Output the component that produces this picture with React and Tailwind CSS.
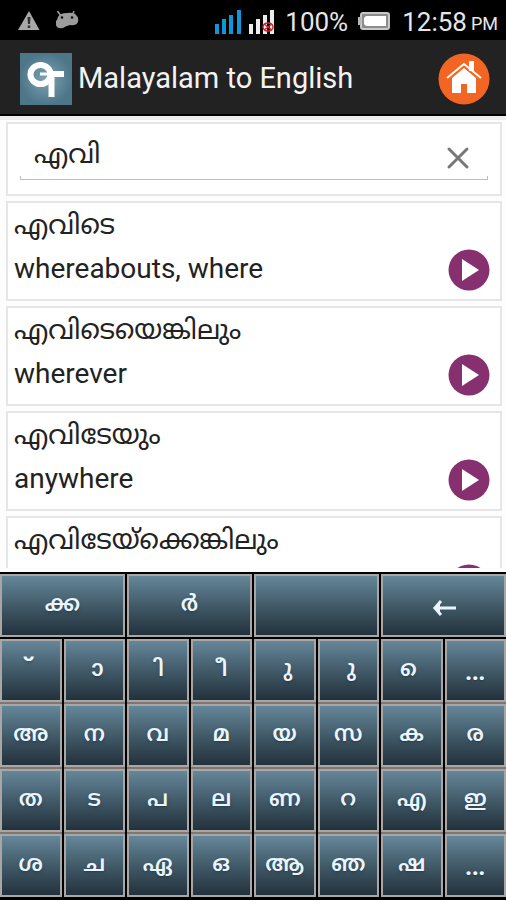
import { X } from 'lucide-react';

const results = [
  { id: 1, word: 'എവിടെ', meaning: 'whereabouts, where' },
  { id: 2, word: 'എവിടെയെങ്കിലും', meaning: 'wherever' },
  { id: 3, word: 'എവിടേയും', meaning: 'anywhere' },
  { id: 4, word: 'എവിടേയ്ക്കെങ്കിലും', meaning: '' },
];

const wideKeys = ['ക്ക', 'ർ', '', '←'];

// vowel signs are set on a no-break space so they stand alone
const keyRows = [
  ['˘', '\u00a0ാ', '\u00a0ി', '\u00a0ീ', '\u00a0ു', '\u00a0ു', '\u00a0െ', '...'],
  ['അ', 'ന', 'വ', 'മ', 'യ', 'സ', 'ക', 'ര'],
  ['ത', 'ട', 'പ', 'ല', 'ണ', 'റ', 'എ', 'ഇ'],
  ['ശ', 'ച', 'ഏ', 'ഒ', 'ആ', 'ഞ', 'ഷ', '...'],
];

const StatusBar = () => (
  <div className="flex h-10 shrink-0 items-center bg-black pl-4 pr-2 pt-1 text-[26px] text-[#e6e6e6]">
    <svg className="h-6 w-6" viewBox="0 0 24 24" fill="#a8a8a8">
      <path d="M13 1 23.500 20H2z" />
      <path d="M11.500 7h3l-.5 7h-2zM11.700 15.500h2.600v2.500h-2.600z" fill="#333" />
    </svg>
    <svg className="ml-4 h-6 w-6" viewBox="0 0 24 24" fill="#9c9c9c">
      <path d="M1.500 1 5 6M18 1 16 6" stroke="#9c9c9c" strokeWidth="1.500" />
      <path d="M2 7Q4 3 11 3Q18 2 20 5Q23 7 22 12Q20 16 14 15Q10 16 7 18Q1 19 0 15Q-1 11 1 10Z" />
      <circle cx="6" cy="7.500" r="1.300" fill="#111" />
      <circle cx="16" cy="7.500" r="1.300" fill="#111" />
    </svg>
    <div className="ml-auto flex items-center">
      <svg className="h-8 w-16" viewBox="0 0 64 32">
        <path d="M2 18h4v10H2zM9 13h4v15H9zM16 9h4v19h-4zM24 4h4v24h-4z" fill="#0f96d8" />
        <path d="M36 18h4v10h-4zM43 13h4v15h-4zM50 9h4v19h-4zM57 4h4v24h-4z" fill="#ececec" />
        <ellipse cx="55" cy="21" rx="5" ry="4" fill="none" stroke="#c8272d" strokeWidth="1.500" />
        <path d="m51 18 8 6m0-6-8 6" stroke="#c8272d" strokeWidth="1.500" />
      </svg>
      <span className="ml-2">100%</span>
      <svg className="ml-2.5 h-5 w-8" viewBox="0 0 32 20">
        <rect x="3" y="1" width="28" height="16" rx="2" fill="#8c8c8c" stroke="#c8c8c8" strokeWidth="2" />
        <path d="M0 5h3v8H0z" fill="#b5b5b5" />
        <path d="M8 4h20v10H8l-2-2V6z" fill="#fff" />
      </svg>
      <span className="ml-3">12:58</span>
      <span className="ml-1 pt-1 text-lg">PM</span>
    </div>
  </div>
);

const Header = () => (
  <header className="flex h-19 shrink-0 items-center border-b-2 border-black bg-[#222] pl-5 pr-4 pt-1">
    <svg className="h-13 w-13" viewBox="0 0 52 52">
      <defs>
        <radialGradient id="logo">
          <stop offset="0" stopColor="#7fa3b1" />
          <stop offset="1" stopColor="#4d7689" />
        </radialGradient>
      </defs>
      <rect width="52" height="52" fill="url(#logo)" />
      <g fill="none" stroke="#fff" strokeWidth="6">
        <ellipse cx="20.500" cy="21.500" rx="10" ry="9.500" />
        <path d="M27 21h17M31.500 18v26" />
        <path d="M20 21h8" strokeWidth="3" />
      </g>
    </svg>
    <h1 className="ml-1.5 text-[29px] text-[#f3f3f3]">Malayalam to English</h1>
    <button aria-label="Home" className="ml-auto">
      <svg className="h-13 w-13" viewBox="0 0 52 52">
        <circle cx="26" cy="26" r="25.500" fill="#f26522" />
        <path d="M31 8h5v10h-5z" fill="#fff" />
        <path d="M9 25 26 11 43 25" fill="none" stroke="#fff" strokeWidth="2" />
        <path d="M26 15 38 25v15H29V31h-6v9H14V25z" fill="#fff" />
      </svg>
    </button>
  </header>
);

const SearchBox = () => (
  <div className="border-2 border-[#e6e6e6] bg-white px-3 pb-3.5 pt-1">
    <div className="flex h-13 items-center pl-3.5 pr-3">
      <input
        aria-label="Search word"
        defaultValue="എവി"
        className="min-w-0 flex-1 bg-transparent text-[27px] text-[#222] outline-none"
      />
      <button aria-label="Clear" className="mt-2">
        <X className="h-9 w-9 text-[#777]" strokeWidth={2} />
      </button>
    </div>
    <div className="-mt-1 h-1 border-x border-b border-[#c0c0c0]" />
  </div>
);

const ResultCard = ({ word, meaning }) => (
  <li className="flex h-25 shrink-0 items-end justify-between border-2 border-[#e6e6e6] bg-white pb-2 pl-1.5 pr-2.5">
    <div className="text-[#222]">
      <p className="h-11 text-[27px] leading-11">{word}</p>
      <p className="h-11 text-[28px] leading-11">{meaning}</p>
    </div>
    <button aria-label={`Play ${word}`}>
      <svg className="h-10.5 w-10.5" viewBox="0 0 42 42">
        <circle cx="21" cy="21" r="20.500" fill="#86306f" />
        <path d="M14 10 31 21 14 32z" fill="#fff" />
      </svg>
    </button>
  </li>
);

const renderLabel = (label) => {
  switch (label) {
    case '←':
      return (
        <svg className="mt-2 h-6 w-6" viewBox="0 0 24 24" fill="none" stroke="currentColor" strokeWidth="3">
          <path d="M3 12h21M9 5l-6 7 6 7" />
          <path d="M1 12l7-5v10z" fill="currentColor" stroke="none" />
        </svg>
      );
    case '...':
      return <span className="mt-2 font-black">...</span>;
    case '˘':
      return <span className="pr-1 text-3xl font-bold">˘</span>;
    default:
      return label;
  }
};

const Key = ({ label, className }) => (
  <button
    aria-label={label || 'Space'}
    className={`${className} flex h-[63px] items-center justify-center border-2 border-[#aaa6a5] bg-linear-to-b from-[#65879a] to-[#22323c] pb-1 text-[22px] font-semibold text-[#eaf6ff] text-shadow-md`}
  >
    {renderLabel(label)}
  </button>
);

const Keyboard = () => (
  <div className="grid shrink-0 grid-cols-8 gap-0.5 bg-black pb-[3px] pt-0.5">
    {wideKeys.map((label) => (
      <Key key={label} label={label} className="col-span-2" />
    ))}
    {keyRows.map((row, r) =>
      row.map((label, i) => (
        <Key
          key={`${r}-${i}`}
          label={label}
          className={r < 3 ? 'shadow-[0_2px_0_#7d7674]' : 'shadow-none'}
        />
      ))
    )}
  </div>
);

export default function App() {
  return (
    <div className="flex h-screen flex-col overflow-hidden bg-[#fdfdfd] font-[Roboto,'Noto_Sans_Malayalam','Noto_Sans',sans-serif]">
      <StatusBar />
      <Header />
      <main className="flex min-h-0 flex-1 flex-col border-t-4 border-[#ececec] pb-1 pl-1.5 pr-1 pt-0.5">
        <SearchBox />
        <ul className="mt-[5px] flex min-h-0 flex-1 flex-col gap-[5px] overflow-hidden">
          {results.map((item) => (
            <ResultCard key={item.id} word={item.word} meaning={item.meaning} />
          ))}
        </ul>
      </main>
      <Keyboard />
    </div>
  );
}
